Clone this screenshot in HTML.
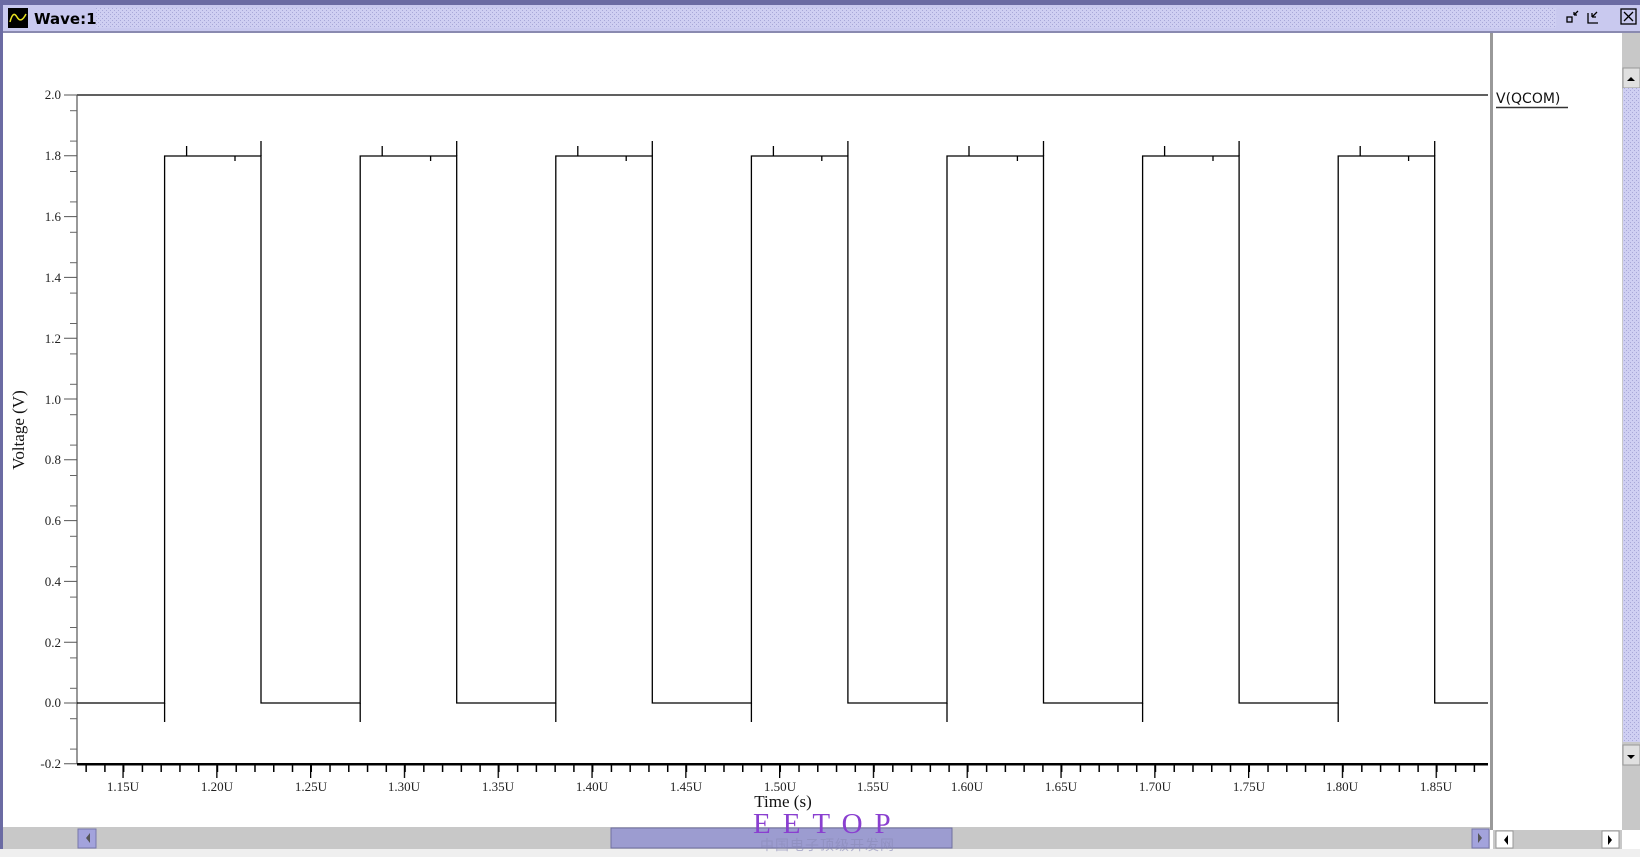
<!DOCTYPE html>
<html><head><meta charset="utf-8"><style>
html,body{margin:0;padding:0;width:1640px;height:857px;overflow:hidden;background:#fff}
svg{display:block}
</style></head><body>
<svg width="1640" height="857" viewBox="0 0 1640 857" xmlns="http://www.w3.org/2000/svg" font-family="Liberation Serif, serif">
<defs>
<pattern id="dith" patternUnits="userSpaceOnUse" width="4" height="4"><rect width="4" height="4" fill="#cfcff2"/><rect width="1" height="1" fill="#a8a8d8"/><rect x="2" y="2" width="1" height="1" fill="#a8a8d8"/></pattern>
<pattern id="xmin" patternUnits="userSpaceOnUse" x="85.4" y="0" width="18.76" height="857"><rect x="0" y="764" width="1.5" height="8" fill="#000"/></pattern>
<pattern id="xmaj" patternUnits="userSpaceOnUse" x="122.4" y="0" width="93.8" height="857"><rect x="0" y="764" width="1.3" height="14" fill="#000"/></pattern>
<pattern id="ymin" patternUnits="userSpaceOnUse" x="0" y="79.8" width="1640" height="30.4"><rect x="70" y="0" width="7" height="1" fill="#666"/></pattern>
</defs>
<!-- window frame -->
<rect width="1640" height="857" fill="#fff"/>
<rect x="0" y="0" width="1640" height="5" fill="#6b6ba3"/>
<rect x="0" y="5" width="1640" height="27" fill="#c9c9ef"/>
<rect x="96" y="8" width="1460" height="20" fill="url(#dith)"/>
<rect x="0" y="31" width="1640" height="2" fill="#8a8ab0"/>
<rect x="0" y="0" width="3" height="857" fill="#6b6ba3"/>
<!-- title icon -->
<rect x="8" y="8" width="20" height="20" fill="#000"/>
<path d="M10 22 Q13 10 17 17 T26 14" stroke="#e8e020" stroke-width="1.5" fill="none"/>
<text x="34" y="24" font-family="DejaVu Sans, Liberation Sans, sans-serif" font-weight="bold" font-size="15" fill="#000">Wave:1</text>
<!-- right icons -->
<g stroke="#000" stroke-width="1.3" fill="none">
<rect x="1567" y="17" width="5" height="5"/><path d="M1574 15 L1578 11 M1574 15 h3 M1574 15 v-3"/>
<path d="M1588 13 v10 h10 M1592 17 L1597 12 M1592 17 h4 M1592 17 v-4"/>
<rect x="1621" y="9" width="15" height="15"/><path d="M1624 12 L1633 21 M1633 12 L1624 21"/>
</g>
<!-- plot -->
<line x1="77" y1="95" x2="1488" y2="95" stroke="#000" stroke-width="1.3"/>
<line x1="77" y1="95" x2="77" y2="764" stroke="#555" stroke-width="1.2"/>
<rect x="77" y="763" width="1411" height="2.5" fill="#000"/>
<rect x="77" y="765" width="1411" height="20" fill="url(#xmin)"/>
<rect x="77" y="765" width="1411" height="20" fill="url(#xmaj)"/>
<rect x="60" y="90" width="17" height="680" fill="url(#ymin)"/>
<g stroke="#555" stroke-width="1">
<path d="M64 95h13M64 155.8h13M64 216.6h13M64 277.4h13M64 338.2h13M64 399h13M64 459.8h13M64 520.6h13M64 581.4h13M64 642.2h13M64 703h13M64 763.8h13"/>
</g>
<g font-size="13" fill="#222" text-anchor="end">
<text x="61" y="99">2.0</text><text x="61" y="160">1.8</text><text x="61" y="221">1.6</text><text x="61" y="282">1.4</text><text x="61" y="343">1.2</text><text x="61" y="404">1.0</text><text x="61" y="464">0.8</text><text x="61" y="525">0.6</text><text x="61" y="586">0.4</text><text x="61" y="647">0.2</text><text x="61" y="707">0.0</text><text x="61" y="768">-0.2</text>
</g>
<g font-size="13" fill="#222" text-anchor="middle">
<text x="123" y="791">1.15U</text><text x="217" y="791">1.20U</text><text x="311" y="791">1.25U</text><text x="404" y="791">1.30U</text><text x="498" y="791">1.35U</text><text x="592" y="791">1.40U</text><text x="686" y="791">1.45U</text><text x="780" y="791">1.50U</text><text x="873" y="791">1.55U</text><text x="967" y="791">1.60U</text><text x="1061" y="791">1.65U</text><text x="1155" y="791">1.70U</text><text x="1249" y="791">1.75U</text><text x="1342" y="791">1.80U</text><text x="1436" y="791">1.85U</text>
</g>
<text x="783" y="807" font-size="17" text-anchor="middle" fill="#111">Time (s)</text>
<text transform="translate(24 430) rotate(-90)" font-size="17" text-anchor="middle" fill="#111">Voltage (V)</text>
<!-- waveform -->
<path fill="none" stroke="#000" stroke-width="1.3" d="M77 703 H164.6 V156 H261 V703 H360.2 V156 H456.7 V703 H555.8 V156 H652.3 V703 H751.4 V156 H847.9 V703 H947 V156 H1043.5 V703 H1142.6 V156 H1239.1 V703 H1338.2 V156 H1434.7 V703 H1488"/>
<g stroke="#000" stroke-width="1.3">
<path d="M164.6 703v19M261 156v-15M186.6 156v-10M235 156v5
M360.2 703v19M456.7 156v-15M382.2 156v-10M430.6 156v5
M555.8 703v19M652.3 156v-15M577.8 156v-10M626.2 156v5
M751.4 703v19M847.9 156v-15M773.4 156v-10M821.8 156v5
M947 703v19M1043.5 156v-15M969 156v-10M1017.4 156v5
M1142.6 703v19M1239.1 156v-15M1164.6 156v-10M1213 156v5
M1338.2 703v19M1434.7 156v-15M1360.2 156v-10M1408.6 156v5"/>
</g>
<!-- divider & legend -->
<rect x="1490" y="33" width="3" height="797" fill="#999"/>
<text x="1496" y="103" font-family="DejaVu Sans, Liberation Sans, sans-serif" font-size="14" fill="#111">V(QCOM)</text>
<line x1="1496" y1="107.5" x2="1568" y2="107.5" stroke="#333" stroke-width="1.5"/>
<!-- right vertical scrollbar -->
<rect x="1622" y="33" width="18" height="797" fill="#c8c8c8"/>
<rect x="1623" y="68" width="17" height="20" fill="#e0e0e0" stroke="#999"/>
<path d="M1627 81 l4 -4 l4 4z" fill="#000"/>
<rect x="1623" y="88" width="17" height="654" fill="url(#dith)"/>
<rect x="1623" y="745" width="17" height="20" fill="#e0e0e0" stroke="#999"/>
<path d="M1627 755 l4 4 l4 -4z" fill="#000"/>
<!-- bottom scrollbar -->
<rect x="3" y="827" width="1487" height="22" fill="#c8c8c8"/>
<rect x="78" y="829" width="18" height="19" fill="#a3a3dc" stroke="#7777aa"/>
<path d="M90 833 l-4 5 l4 5z" fill="#555"/>
<rect x="611" y="828" width="341" height="20" fill="#9c9cd0" stroke="#6f6fa0"/>
<rect x="1472" y="829" width="17" height="19" fill="#a3a3dc" stroke="#7777aa"/>
<path d="M1478 833 l4 5 l-4 5z" fill="#555"/>
<rect x="1493" y="830" width="129" height="19" fill="#c8c8c8"/>
<rect x="1496" y="831" width="17" height="17" fill="#fff" stroke="#999"/>
<path d="M1508 835 l-4 5 l4 5z" fill="#000"/>
<rect x="1602" y="831" width="17" height="17" fill="#fff" stroke="#999"/>
<path d="M1608 835 l4 5 l-4 5z" fill="#000"/>
<rect x="0" y="849" width="1640" height="8" fill="#efefef"/>
<!-- watermark -->
<text x="753" y="833" font-size="29" fill="#8a3fd0" letter-spacing="12">EETOP</text>
<text x="760" y="850" font-family="Noto Sans CJK SC, sans-serif" font-size="14" fill="#8a8ab8" opacity="0.6" letter-spacing="1">中国电子顶级开发网</text>
</svg>
</body></html>
